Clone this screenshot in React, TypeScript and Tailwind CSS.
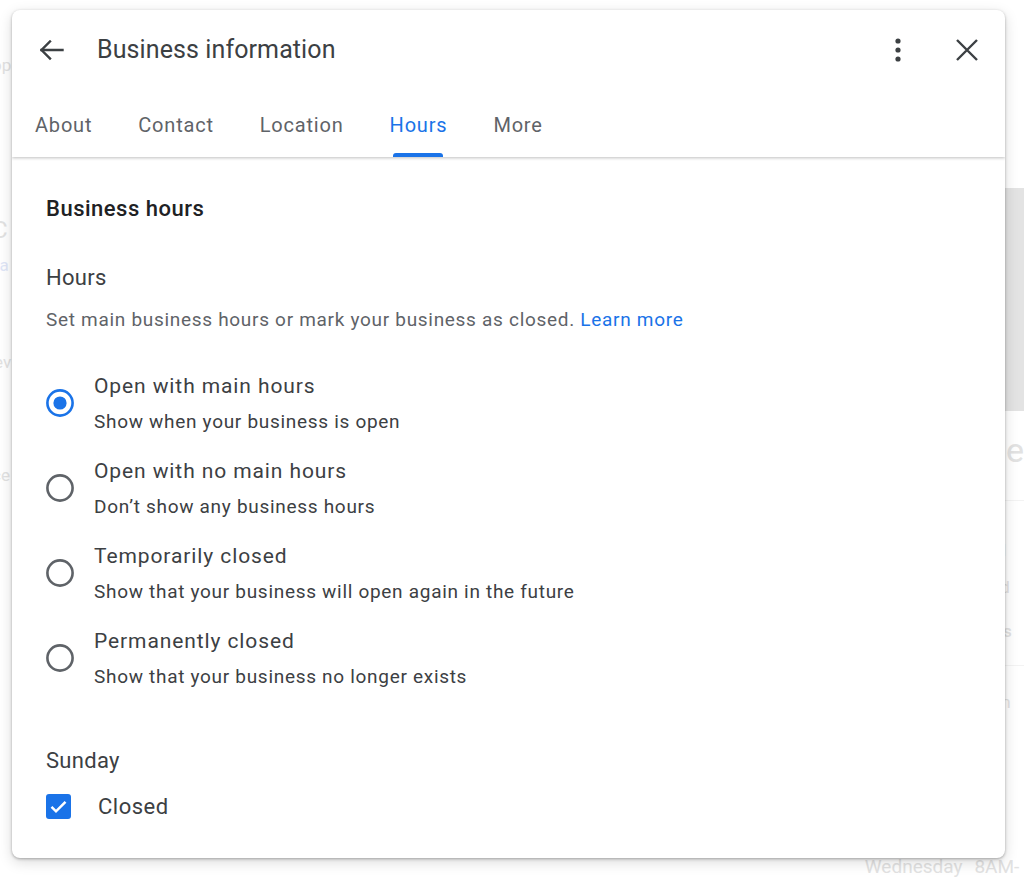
import { useState } from "react";

const tabs = ["About", "Contact", "Location", "Hours", "More"];

const options = [
  { id: "main", title: "Open with main hours", hint: "Show when your business is open" },
  { id: "none", title: "Open with no main hours", hint: "Don’t show any business hours" },
  { id: "temp", title: "Temporarily closed", hint: "Show that your business will open again in the future" },
  { id: "perm", title: "Permanently closed", hint: "Show that your business no longer exists" },
];

function BackArrow() {
  return (
    <svg width="28" height="24" viewBox="0 0 28 24" fill="none" stroke="#3c4043" strokeWidth="2.4" strokeLinecap="square">
      <path d="M3.5 12H24.5" />
      <path d="M12 3.5L3.5 12L12 20.5" />
    </svg>
  );
}

function MoreDots() {
  return (
    <svg width="8" height="24" viewBox="0 0 8 24" fill="#3c4043">
      <circle cx="4" cy="3" r="2.6" />
      <circle cx="4" cy="12" r="2.6" />
      <circle cx="4" cy="21" r="2.6" />
    </svg>
  );
}

function CloseIcon() {
  return (
    <svg width="22" height="22" viewBox="0 0 22 22" fill="none" stroke="#3c4043" strokeWidth="2.4">
      <path d="M1 1L21 21M21 1L1 21" />
    </svg>
  );
}

function Radio({ checked }: { checked: boolean }) {
  return (
    <svg width="28" height="28" viewBox="0 0 28 28" fill="none">
      <circle cx="14" cy="14" r="12.6" stroke={checked ? "#1a73e8" : "#5f6368"} strokeWidth="2.6" />
      {checked && <circle cx="14" cy="14" r="6.6" fill="#1a73e8" />}
    </svg>
  );
}

function BackdropPage() {
  // faded listing page sitting under the dialog
  return (
    <div className="flex h-full w-full bg-white text-[17px] leading-[20px] text-[#e2e2e2]">
      <div className="flex w-[860px] flex-col pt-[55px]">
        <span className="-ml-[8px]">op</span>
        <span className="-ml-[8px] mt-[140px] text-[24px] leading-[30px]">C</span>
        <span className="-ml-[6px] mt-[10px] text-[#dfe6f7]">ra</span>
        <span className="-ml-[6px] mt-[77px]">ev</span>
        <span className="-ml-[8px] mt-[93px]">ce</span>
      </div>
      <div className="flex flex-1 flex-col pt-[188px]">
        <div className="ml-[146px] h-[228px] bg-[#e3e3e3]" />
        <span className="ml-[142px] mt-[19px] text-[34px] leading-[40px]">de</span>
        <div className="ml-[146px] mt-[30px] h-px bg-[#f3f3f3]" />
        <span className="ml-[138px] mt-[39px] text-[#dde4f6]">ogl</span>
        <span className="ml-[138px] mt-[17px]">ked</span>
        <span className="ml-[138px] mt-[24px] font-medium">Bus</span>
        <div className="ml-[146px] mt-[24px] h-px bg-[#f3f3f3]" />
        <span className="ml-[138px] mt-[26px]">son</span>
        <span className="ml-[140px] mt-[23px] font-medium">se</span>
        <span className="ml-[140px] mt-[12px]">se</span>
        <span className="ml-[138px] mt-[10px]">M-</span>
        <span className="ml-[138px] mt-[11px]">M-</span>
        <div className="ml-[20px] mt-[8px] flex gap-[12px] text-[19px] leading-[22px]">
          <span>Wednesday</span>
          <span>8AM-</span>
        </div>
      </div>
    </div>
  );
}

export default function App() {
  const [choice, setChoice] = useState("main");
  const [sundayClosed, setSundayClosed] = useState(true);

  return (
    <div className="relative h-[878px] w-[1024px] overflow-hidden font-['Roboto',_'Liberation_Sans',_sans-serif]">
      <BackdropPage />

      <div className="absolute left-[12px] top-[10px] flex h-[848px] w-[993px] flex-col overflow-hidden rounded-[8px] bg-white shadow-[0_1px_3px_rgba(0,0,0,0.3),0_4px_14px_rgba(0,0,0,0.15)]">
        <header className="relative z-10 shadow-[0_1px_3px_rgba(0,0,0,0.25)]">
          <div className="flex h-[80px] items-center pl-[26px] pr-[27px]">
            <button type="button" className="flex h-[24px] w-[28px] items-center">
              <BackArrow />
            </button>
            <h1 className="ml-[31px] flex-1 text-[25px] tracking-[0.1px] text-[#3c4043]">Business information</h1>
            <button type="button" className="mr-[54px] flex items-center">
              <MoreDots />
            </button>
            <button type="button" className="flex items-center">
              <CloseIcon />
            </button>
          </div>
          <nav className="flex h-[67px] gap-[46px] pl-[23px]">
            {tabs.map((tab) => {
              const active = tab === "Hours";
              return (
                <button
                  key={tab}
                  type="button"
                  className={`relative flex flex-col items-center pt-[20px] text-[20px] tracking-[0.8px] ${
                    active ? "text-[#1a73e8]" : "text-[#5f6368]"
                  }`}
                >
                  {tab}
                  {active && <span className="absolute bottom-0 h-[4px] w-[50px] rounded-t-[3px] bg-[#1a73e8]" />}
                </button>
              );
            })}
          </nav>
        </header>

        <main className="flex flex-col px-[34px] pt-[38px]">
          <h2 className="text-[22px] font-medium leading-[28px] tracking-[0.5px] text-[#202124]">Business hours</h2>
          <h3 className="mt-[41px] text-[22px] leading-[28px] tracking-[0.3px] text-[#3c4043]">Hours</h3>
          <p className="mt-[16px] text-[19px] leading-[24px] tracking-[0.7px] text-[#5f6368]">
            Set main business hours or mark your business as closed.{" "}
            <a className="text-[#1a73e8]">Learn more</a>
          </p>

          <div className="mt-[40px] flex flex-col gap-[23px]">
            {options.map((opt) => (
              <label key={opt.id} className="flex items-center gap-[20px]" onClick={() => setChoice(opt.id)}>
                <Radio checked={choice === opt.id} />
                <span className="flex flex-col">
                  <span className="text-[21px] leading-[28px] tracking-[0.9px] text-[#3c4043]">{opt.title}</span>
                  <span className="mt-[10px] text-[19px] leading-[24px] tracking-[0.7px] text-[#3c4043]">{opt.hint}</span>
                </span>
              </label>
            ))}
          </div>

          <h3 className="mt-[58px] text-[22px] leading-[28px] tracking-[0.3px] text-[#3c4043]">Sunday</h3>
          <label className="mt-[18px] flex h-[26px] items-center gap-[27px]" onClick={() => setSundayClosed(!sundayClosed)}>
            <span
              className={`flex h-[25px] w-[25px] items-center justify-center rounded-[3px] ${
                sundayClosed ? "bg-[#1a73e8]" : "border-2 border-[#5f6368]"
              }`}
            >
              {sundayClosed && (
                <svg width="19" height="19" viewBox="0 0 19 19" fill="none" stroke="white" strokeWidth="2.5">
                  <path d="M2.5 9.8L7 14.3L16.5 4.8" />
                </svg>
              )}
            </span>
            <span className="text-[22px] tracking-[0.5px] text-[#3c4043]">Closed</span>
          </label>
        </main>
      </div>
    </div>
  );
}
